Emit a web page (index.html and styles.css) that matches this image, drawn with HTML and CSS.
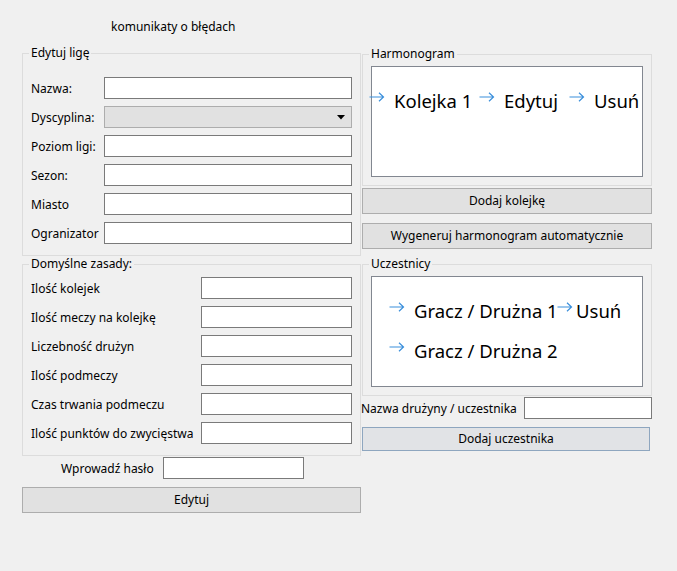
FILE: index.html
```html
<!DOCTYPE html>
<html lang="pl">
<head>
<meta charset="utf-8">
<title>Edytuj ligę</title>
<link rel="stylesheet" href="styles.css">
</head>
<body>
<div class="window">
  <div class="msg">komunikaty o błędach</div>
  <div class="cols">
    <div class="left">
      <fieldset class="group g1">
        <legend>Edytuj ligę</legend>
        <div class="form f1">
          <div class="row"><span class="lbl l1">Nazwa:</span><input class="field wide" type="text"></div>
          <div class="row"><span class="lbl l1">Dyscyplina:</span><div class="combo"><svg class="caret" width="8" height="5" viewBox="0 0 8 5"><path d="M0 0H8L4 4.5Z" fill="#000"/></svg></div></div>
          <div class="row"><span class="lbl l1">Poziom ligi:</span><input class="field wide" type="text"></div>
          <div class="row"><span class="lbl l1">Sezon:</span><input class="field wide" type="text"></div>
          <div class="row"><span class="lbl l1">Miasto</span><input class="field wide" type="text"></div>
          <div class="row"><span class="lbl l1">Ogranizator</span><input class="field wide" type="text"></div>
        </div>
      </fieldset>
      <fieldset class="group g2">
        <legend>Domyślne zasady:</legend>
        <div class="form f2">
          <div class="row"><span class="lbl l2">Ilość kolejek</span><input class="field mid" type="text"></div>
          <div class="row"><span class="lbl l2">Ilość meczy na kolejkę</span><input class="field mid" type="text"></div>
          <div class="row"><span class="lbl l2">Liczebność drużyn</span><input class="field mid" type="text"></div>
          <div class="row"><span class="lbl l2">Ilość podmeczy</span><input class="field mid" type="text"></div>
          <div class="row"><span class="lbl l2">Czas trwania podmeczu</span><input class="field mid" type="text"></div>
          <div class="row"><span class="lbl l2">Ilość punktów do zwycięstwa</span><input class="field mid" type="text"></div>
        </div>
      </fieldset>
      <div class="row pass"><span class="lbl l3">Wprowadź hasło</span><input class="field pw" type="password"></div>
      <div class="btn edit">Edytuj</div>
    </div>
    <div class="right">
      <fieldset class="group g3">
        <legend>Harmonogram</legend>
        <div class="list">
          <div class="lrow r-harm">
            <div class="item i-k1"><svg class="arr" width="16" height="16" viewBox="0 0 16 16"><path d="M0.5 8H14.5M10 3.8L14.5 8L10 12.2" fill="none" stroke="#3a8fdb" stroke-width="1.2"/></svg><span class="itxt">Kolejka 1</span></div>
            <div class="item i-ed"><svg class="arr" width="16" height="16" viewBox="0 0 16 16"><path d="M0.5 8H14.5M10 3.8L14.5 8L10 12.2" fill="none" stroke="#3a8fdb" stroke-width="1.2"/></svg><span class="itxt">Edytuj</span></div>
            <div class="item"><svg class="arr" width="16" height="16" viewBox="0 0 16 16"><path d="M0.5 8H14.5M10 3.8L14.5 8L10 12.2" fill="none" stroke="#3a8fdb" stroke-width="1.2"/></svg><span class="itxt">Usuń</span></div>
          </div>
        </div>
      </fieldset>
      <div class="btn rbtn b-add">Dodaj kolejkę</div>
      <div class="btn rbtn b-gen">Wygeneruj harmonogram automatycznie</div>
      <fieldset class="group g4">
        <legend>Uczestnicy</legend>
        <div class="list">
          <div class="lrow r-ucz">
            <div class="item i-g1"><svg class="arr" width="16" height="16" viewBox="0 0 16 16"><path d="M0.5 8H14.5M10 3.8L14.5 8L10 12.2" fill="none" stroke="#3a8fdb" stroke-width="1.2"/></svg><span class="itxt">Gracz / Drużna 1</span></div>
            <div class="item i-us"><svg class="arr" width="16" height="16" viewBox="0 0 16 16"><path d="M0.5 8H14.5M10 3.8L14.5 8L10 12.2" fill="none" stroke="#3a8fdb" stroke-width="1.2"/></svg><span class="itxt">Usuń</span></div>
          </div>
          <div class="lrow r-ucz r-second">
            <div class="item"><svg class="arr" width="16" height="16" viewBox="0 0 16 16"><path d="M0.5 8H14.5M10 3.8L14.5 8L10 12.2" fill="none" stroke="#3a8fdb" stroke-width="1.2"/></svg><span class="itxt">Gracz / Drużna 2</span></div>
          </div>
        </div>
      </fieldset>
      <div class="row team"><span class="lbl l4">Nazwa drużyny / uczestnika</span><input class="field tm" type="text"></div>
      <div class="btn b-part">Dodaj uczestnika</div>
    </div>
  </div>
</div>
</body>
</html>
```
FILE: styles.css
```css
* { box-sizing: border-box; }
html, body { margin: 0; padding: 0; }
body {
  background: #f0f0f0;
  font-family: "Noto Sans", "Open Sans", sans-serif;
  font-size: 12px;
  color: #000;
  width: 677px;
  height: 571px;
  overflow: hidden;
}
.window { padding-left: 22px; }
.msg {
  padding-top: 19px;
  margin-left: 89px;
  line-height: 16px;
  height: 35px;
}
.cols { display: flex; margin-top: 10px; }
.left { width: 339px; display: flex; flex-direction: column; }
.right { width: 291px; display: flex; flex-direction: column; margin-top: 1px; }

.group {
  margin: 0;
  padding: 0;
  border: 1px solid #dcdcdc;
  min-width: 0;
}
.group legend {
  margin-left: 6px;
  padding: 0 2px;
  line-height: 16px;
  height: 16px;
}
.g1, .g2 { width: 339px; }
.form { display: flex; flex-direction: column; gap: 7px; padding: 0 8px; }
.f1 { padding-top: 16px; padding-bottom: 11px; }
.f2 { padding-top: 5px; padding-bottom: 11px; }

.row { display: flex; align-items: center; height: 22px; }
.lbl { line-height: 16px; padding-top: 2px; white-space: nowrap; }
.l1 { width: 73px; }
.l2 { width: 171px; }
.field {
  height: 22px;
  margin: 0;
  padding: 0;
  border: 1px solid #7a7a7a;
  background: #fff;
  border-radius: 0;
  outline: none;
}
.wide { width: 249px; }
.mid { width: 151px; }
.combo {
  width: 249px;
  height: 22px;
  border: 1px solid #adadad;
  background: #e1e1e1;
  display: flex;
  align-items: center;
  justify-content: flex-end;
  padding-right: 6px;
}
.caret { display: block; margin-top: 1px; }

.pass { margin-top: 1px; padding-left: 39px; }
.l3 { width: 102px; }
.pw { width: 141px; }

.btn {
  height: 26px;
  border: 1px solid #adadad;
  background: #e1e1e1;
  display: flex;
  align-items: center;
  justify-content: center;
  line-height: 16px;
  white-space: nowrap;
}
.edit { margin-top: 8px; width: 339px; }

.g3, .g4 { margin-left: 1px; width: 290px; }
.list {
  margin: 4px 0 8px 8px;
  width: 272px;
  height: 111px;
  border: 1px solid #828790;
  background: #fff;
  overflow: visible;
  font-size: 18.5px;
  padding-top: 21px;
}
.lrow { display: flex; height: 26px; line-height: 26px; white-space: nowrap; }
.r-harm { margin-left: -3px; }
.r-ucz { margin-left: 17px; }
.r-second { margin-top: 14px; }
.item { display: flex; align-items: flex-start; flex: none; }
.arr { flex: none; margin-top: 1px; }
.itxt { margin-left: 9px; }
.i-k1 { width: 110px; }
.i-ed { width: 90px; }
.i-g1 { width: 168px; }
.i-g1 .itxt { position: relative; z-index: 0; }
.i-us .itxt { margin-left: 3px; }

.rbtn { margin-left: 1px; width: 290px; }
.b-add { margin-top: 2px; }
.b-gen { margin-top: 9px; margin-bottom: 7px; }

.team { margin-top: 1px; }
.l4 { width: 164px; }
.tm { width: 128px; }
.b-part {
  margin-top: 8px;
  margin-left: 1px;
  width: 288px;
  height: 24px;
  border-color: #8ea6bf;
  background: #e1e3e6;
}
```
